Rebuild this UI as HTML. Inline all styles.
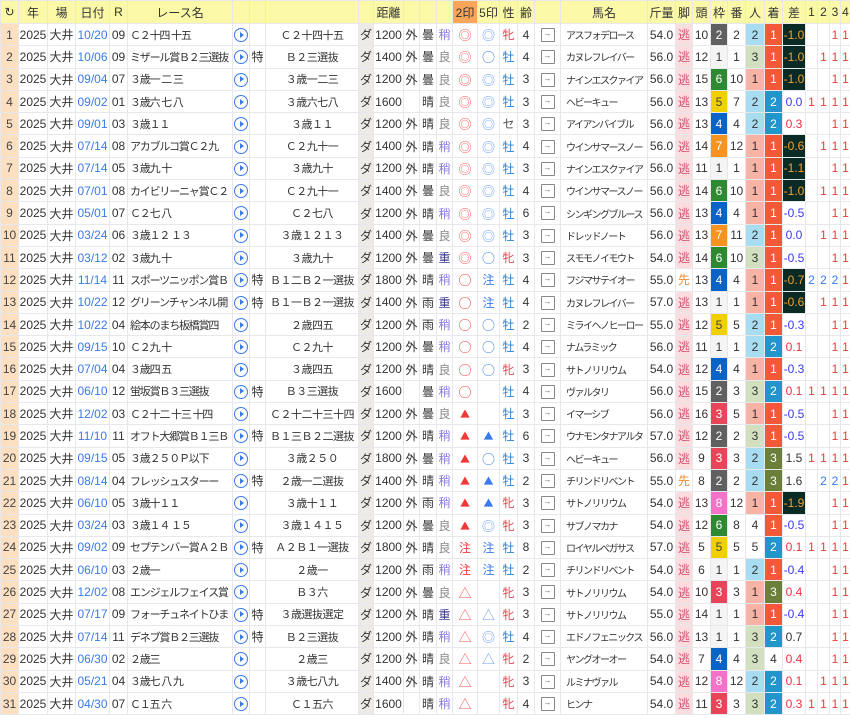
<!DOCTYPE html>
<html><head><meta charset="utf-8">
<style>
*{margin:0;padding:0;box-sizing:border-box}
body{width:850px;height:715px;overflow:hidden;background:#fff;font-family:"Liberation Sans","Noto Sans CJK JP",sans-serif;font-size:12px;color:#333}
table{border-collapse:collapse;table-layout:fixed;width:850px}
td,th{border:1px solid #e6e8ec;text-align:center;white-space:nowrap;overflow:hidden;height:22.3px;padding:0;font-weight:normal}
th{background:#fbf9a8;height:23px;color:#333}
th.o{background:#f9a55a}
td.i{background:#fde0c2;color:#444}
td.d{color:#3a7ae8}
td.n{text-align:left;padding-left:2px;font-size:11px;letter-spacing:-1.2px}
td.c{font-size:11px;letter-spacing:-0.5px}
td.h{text-align:left;padding-left:5px;font-size:10px;letter-spacing:-1.5px}
td.g{background:#eeeae5}
.p::after{content:"";display:inline-block;width:12px;height:12px;border:1.5px solid #3a7ae8;border-radius:50%;vertical-align:middle}
.p{position:relative}
.p::before{content:"";position:absolute;left:7px;top:50%;margin-top:-3px;border-left:4px solid #3a7ae8;border-top:3px solid transparent;border-bottom:3px solid transparent}
.a::after{content:"→";display:inline-block;width:12px;height:12px;border:1px solid #888;border-radius:1px;font-size:8px;line-height:10px;color:#666;vertical-align:middle}
.y{color:#8a7ae0}.l{color:#888}.z{color:#3a3a90}
.mk{font-family:"Noto Sans CJK JP",sans-serif;font-size:13px}
td.t{font-size:10px}
.r{color:#f03a3a}.b{color:#3a7af0}
.rt{color:#f55}.bt{color:#6a9af5}
.m{color:#2a80d0}.f{color:#e84050}.se{color:#555}
.k{background:#fbdde0;color:#d05070}
.kk{color:#f08a30}
.w1{background:#f4f4f4}.w2{background:#606060;color:#fff}.w3{background:#e8455a;color:#fff}.w4{background:#0a64c8;color:#fff}.w5{background:#f0d000;color:#444}.w6{background:#2e8a30;color:#fff}.w7{background:#f79420;color:#fff}.w8{background:#f672c8;color:#fff}
.n1{background:#f9b3a5}.n2{background:#a8dcf0}.n3{background:#d3e0c0}
.c1{background:#f5573a;color:#fff}.c2{background:#2296c9;color:#fff}.c3{background:#6b7f3a;color:#fff}
.sd{background:#0a2a25;color:#f0a030}
.sn{color:#3a3af0}.sp{color:#f03040}
</style></head><body>
<table>
<colgroup><col style="width:18px"><col style="width:29px"><col style="width:28px"><col style="width:34px"><col style="width:18px"><col style="width:105px"><col style="width:17px"><col style="width:16px"><col style="width:93px"><col style="width:15px"><col style="width:30px"><col style="width:16px"><col style="width:17px"><col style="width:16px"><col style="width:25px"><col style="width:22px"><col style="width:18px"><col style="width:17px"><col style="width:26px"><col style="width:87px"><col style="width:28px"><col style="width:17px"><col style="width:18px"><col style="width:17px"><col style="width:18px"><col style="width:19px"><col style="width:18px"><col style="width:23px"><col style="width:12px"><col style="width:12px"><col style="width:11px"><col style="width:10px"></colgroup>
<tr><th>↻</th><th>年</th><th>場</th><th>日付</th><th>R</th><th>レース名</th><th></th><th></th><th></th><th></th><th>距離</th><th></th><th></th><th></th><th class="o">2印</th><th>5印</th><th>性</th><th>齢</th><th></th><th>馬名</th><th>斤量</th><th>脚</th><th>頭</th><th>枠</th><th>番</th><th>人</th><th>着</th><th>差</th><th>1</th><th>2</th><th>3</th><th>4</th></tr>
<tr><td class="i">1</td><td>2025</td><td>大井</td><td class="d">10/20</td><td>09</td><td class="n">Ｃ２十四 十五</td><td class="p"></td><td></td><td class="c">Ｃ２十四十五</td><td class="g">ダ</td><td>1200</td><td>外</td><td>曇</td><td class="y">稍</td><td class="mk rt">◎</td><td class="mk bt">◎</td><td class="f">牝</td><td>4</td><td class="a"></td><td class="h">アスフォデロース</td><td>54.0</td><td class="k">逃</td><td>10</td><td class="w2">2</td><td>2</td><td class="n2">2</td><td class="c1">1</td><td class="sd">-1.0</td><td></td><td></td><td class="r">1</td><td class="r">1</td></tr>
<tr><td class="i">2</td><td>2025</td><td>大井</td><td class="d">10/06</td><td>09</td><td class="n">ミザール賞Ｂ２三選抜</td><td class="p"></td><td>特</td><td class="c">Ｂ２三選抜</td><td class="g">ダ</td><td>1400</td><td>外</td><td>曇</td><td class="l">良</td><td class="mk rt">◎</td><td class="mk b">○</td><td class="m">牡</td><td>4</td><td class="a"></td><td class="h">カヌレフレイバー</td><td>56.0</td><td class="k">逃</td><td>12</td><td class="w1">1</td><td>1</td><td class="n3">3</td><td class="c1">1</td><td class="sd">-1.0</td><td></td><td class="r">1</td><td class="r">1</td><td class="r">1</td></tr>
<tr><td class="i">3</td><td>2025</td><td>大井</td><td class="d">09/04</td><td>07</td><td class="n">３歳一 二 三</td><td class="p"></td><td></td><td class="c">３歳一二三</td><td class="g">ダ</td><td>1200</td><td>外</td><td>曇</td><td class="l">良</td><td class="mk rt">◎</td><td class="mk bt">◎</td><td class="m">牡</td><td>3</td><td class="a"></td><td class="h">ナインエスクァイア</td><td>56.0</td><td class="k">逃</td><td>15</td><td class="w6">6</td><td>10</td><td class="n1">1</td><td class="c1">1</td><td class="sd">-1.0</td><td></td><td></td><td class="r">1</td><td class="r">1</td></tr>
<tr><td class="i">4</td><td>2025</td><td>大井</td><td class="d">09/02</td><td>01</td><td class="n">３歳六 七 八</td><td class="p"></td><td></td><td class="c">３歳六七八</td><td class="g">ダ</td><td>1600</td><td></td><td>晴</td><td class="l">良</td><td class="mk rt">◎</td><td class="mk bt">◎</td><td class="m">牡</td><td>3</td><td class="a"></td><td class="h">ヘビーキュー</td><td>56.0</td><td class="k">逃</td><td>13</td><td class="w5">5</td><td>7</td><td class="n2">2</td><td class="c2">2</td><td class="sn">0.0</td><td class="r">1</td><td class="r">1</td><td class="r">1</td><td class="r">1</td></tr>
<tr><td class="i">5</td><td>2025</td><td>大井</td><td class="d">09/01</td><td>03</td><td class="n">３歳１１</td><td class="p"></td><td></td><td class="c">３歳１１</td><td class="g">ダ</td><td>1200</td><td>外</td><td>晴</td><td class="l">良</td><td class="mk rt">◎</td><td class="mk bt">◎</td><td class="se">セ</td><td>3</td><td class="a"></td><td class="h">アイアンバイブル</td><td>56.0</td><td class="k">逃</td><td>13</td><td class="w4">4</td><td>4</td><td class="n2">2</td><td class="c2">2</td><td class="sp">0.3</td><td></td><td></td><td class="r">1</td><td class="r">1</td></tr>
<tr><td class="i">6</td><td>2025</td><td>大井</td><td class="d">07/14</td><td>08</td><td class="n">アカブルコ賞Ｃ２九</td><td class="p"></td><td></td><td class="c">Ｃ２九十一</td><td class="g">ダ</td><td>1400</td><td>外</td><td>晴</td><td class="y">稍</td><td class="mk rt">◎</td><td class="mk bt">◎</td><td class="m">牡</td><td>4</td><td class="a"></td><td class="h">ウインサマースノー</td><td>56.0</td><td class="k">逃</td><td>14</td><td class="w7">7</td><td>12</td><td class="n1">1</td><td class="c1">1</td><td class="sd">-0.6</td><td></td><td class="r">1</td><td class="r">1</td><td class="r">1</td></tr>
<tr><td class="i">7</td><td>2025</td><td>大井</td><td class="d">07/14</td><td>05</td><td class="n">３歳九 十</td><td class="p"></td><td></td><td class="c">３歳九十</td><td class="g">ダ</td><td>1200</td><td>外</td><td>晴</td><td class="y">稍</td><td class="mk rt">◎</td><td class="mk bt">◎</td><td class="m">牡</td><td>3</td><td class="a"></td><td class="h">ナインエスクァイア</td><td>56.0</td><td class="k">逃</td><td>11</td><td class="w1">1</td><td>1</td><td class="n1">1</td><td class="c1">1</td><td class="sd">-1.1</td><td></td><td></td><td class="r">1</td><td class="r">1</td></tr>
<tr><td class="i">8</td><td>2025</td><td>大井</td><td class="d">07/01</td><td>08</td><td class="n">カイビリーニャ賞Ｃ２</td><td class="p"></td><td></td><td class="c">Ｃ２九十一</td><td class="g">ダ</td><td>1400</td><td>外</td><td>曇</td><td class="l">良</td><td class="mk rt">◎</td><td class="mk bt">◎</td><td class="m">牡</td><td>4</td><td class="a"></td><td class="h">ウインサマースノー</td><td>56.0</td><td class="k">逃</td><td>14</td><td class="w6">6</td><td>10</td><td class="n1">1</td><td class="c1">1</td><td class="sd">-1.0</td><td></td><td class="r">1</td><td class="r">1</td><td class="r">1</td></tr>
<tr><td class="i">9</td><td>2025</td><td>大井</td><td class="d">05/01</td><td>07</td><td class="n">Ｃ２七 八</td><td class="p"></td><td></td><td class="c">Ｃ２七八</td><td class="g">ダ</td><td>1200</td><td>外</td><td>晴</td><td class="y">稍</td><td class="mk rt">◎</td><td class="mk bt">◎</td><td class="m">牡</td><td>6</td><td class="a"></td><td class="h">シンギングブルース</td><td>56.0</td><td class="k">逃</td><td>13</td><td class="w4">4</td><td>4</td><td class="n1">1</td><td class="c1">1</td><td class="sn">-0.5</td><td></td><td></td><td class="r">1</td><td class="r">1</td></tr>
<tr><td class="i">10</td><td>2025</td><td>大井</td><td class="d">03/24</td><td>06</td><td class="n">３歳１２ １３</td><td class="p"></td><td></td><td class="c">３歳１２１３</td><td class="g">ダ</td><td>1400</td><td>外</td><td>曇</td><td class="l">良</td><td class="mk rt">◎</td><td class="mk bt">◎</td><td class="m">牡</td><td>3</td><td class="a"></td><td class="h">ドレッドノート</td><td>56.0</td><td class="k">逃</td><td>13</td><td class="w7">7</td><td>11</td><td class="n2">2</td><td class="c1">1</td><td class="sn">0.0</td><td></td><td class="r">1</td><td class="r">1</td><td class="r">1</td></tr>
<tr><td class="i">11</td><td>2025</td><td>大井</td><td class="d">03/12</td><td>02</td><td class="n">３歳九 十</td><td class="p"></td><td></td><td class="c">３歳九十</td><td class="g">ダ</td><td>1200</td><td>外</td><td>曇</td><td class="z">重</td><td class="mk rt">◎</td><td class="mk b">○</td><td class="f">牝</td><td>3</td><td class="a"></td><td class="h">スモモノイモウト</td><td>54.0</td><td class="k">逃</td><td>14</td><td class="w6">6</td><td>10</td><td class="n3">3</td><td class="c1">1</td><td class="sn">-0.5</td><td></td><td></td><td class="r">1</td><td class="r">1</td></tr>
<tr><td class="i">12</td><td>2025</td><td>大井</td><td class="d">11/14</td><td>11</td><td class="n">スポーツニッポン賞Ｂ</td><td class="p"></td><td>特</td><td class="c">Ｂ１二Ｂ２一選抜</td><td class="g">ダ</td><td>1800</td><td>外</td><td>晴</td><td class="y">稍</td><td class="mk r">○</td><td class="b">注</td><td class="m">牡</td><td>4</td><td class="a"></td><td class="h">フジマサテイオー</td><td>55.0</td><td class="kk">先</td><td>13</td><td class="w4">4</td><td>4</td><td class="n1">1</td><td class="c1">1</td><td class="sd">-0.7</td><td class="b">2</td><td class="b">2</td><td class="b">2</td><td class="r">1</td></tr>
<tr><td class="i">13</td><td>2025</td><td>大井</td><td class="d">10/22</td><td>12</td><td class="n">グリーンチャンネル開</td><td class="p"></td><td>特</td><td class="c">Ｂ１一Ｂ２一選抜</td><td class="g">ダ</td><td>1400</td><td>外</td><td>雨</td><td class="z">重</td><td class="mk r">○</td><td class="b">注</td><td class="m">牡</td><td>4</td><td class="a"></td><td class="h">カヌレフレイバー</td><td>57.0</td><td class="k">逃</td><td>13</td><td class="w1">1</td><td>1</td><td class="n1">1</td><td class="c1">1</td><td class="sd">-0.6</td><td></td><td class="r">1</td><td class="r">1</td><td class="r">1</td></tr>
<tr><td class="i">14</td><td>2025</td><td>大井</td><td class="d">10/22</td><td>04</td><td class="n">絵本のまち板橋賞四</td><td class="p"></td><td></td><td class="c">２歳四五</td><td class="g">ダ</td><td>1200</td><td>外</td><td>雨</td><td class="y">稍</td><td class="mk r">○</td><td class="mk b">○</td><td class="m">牡</td><td>2</td><td class="a"></td><td class="h">ミライヘノヒーロー</td><td>55.0</td><td class="k">逃</td><td>12</td><td class="w5">5</td><td>5</td><td class="n2">2</td><td class="c1">1</td><td class="sn">-0.3</td><td></td><td></td><td class="r">1</td><td class="r">1</td></tr>
<tr><td class="i">15</td><td>2025</td><td>大井</td><td class="d">09/15</td><td>10</td><td class="n">Ｃ２九 十</td><td class="p"></td><td></td><td class="c">Ｃ２九十</td><td class="g">ダ</td><td>1200</td><td>外</td><td>曇</td><td class="y">稍</td><td class="mk r">○</td><td class="mk b">○</td><td class="m">牡</td><td>4</td><td class="a"></td><td class="h">ナムラミック</td><td>56.0</td><td class="k">逃</td><td>11</td><td class="w1">1</td><td>1</td><td class="n2">2</td><td class="c2">2</td><td class="sp">0.1</td><td></td><td></td><td class="r">1</td><td class="r">1</td></tr>
<tr><td class="i">16</td><td>2025</td><td>大井</td><td class="d">07/04</td><td>04</td><td class="n">３歳四 五</td><td class="p"></td><td></td><td class="c">３歳四五</td><td class="g">ダ</td><td>1200</td><td>外</td><td>晴</td><td class="l">良</td><td class="mk r">○</td><td class="mk b">○</td><td class="f">牝</td><td>3</td><td class="a"></td><td class="h">サトノリリウム</td><td>54.0</td><td class="k">逃</td><td>12</td><td class="w4">4</td><td>4</td><td class="n1">1</td><td class="c1">1</td><td class="sn">-0.3</td><td></td><td></td><td class="r">1</td><td class="r">1</td></tr>
<tr><td class="i">17</td><td>2025</td><td>大井</td><td class="d">06/10</td><td>12</td><td class="n">蛍坂賞Ｂ３三選抜</td><td class="p"></td><td>特</td><td class="c">Ｂ３三選抜</td><td class="g">ダ</td><td>1600</td><td></td><td>曇</td><td class="y">稍</td><td class="mk r">○</td><td></td><td class="m">牡</td><td>4</td><td class="a"></td><td class="h">ヴァルタリ</td><td>56.0</td><td class="k">逃</td><td>15</td><td class="w2">2</td><td>3</td><td class="n3">3</td><td class="c2">2</td><td class="sp">0.1</td><td class="r">1</td><td class="r">1</td><td class="r">1</td><td class="r">1</td></tr>
<tr><td class="i">18</td><td>2025</td><td>大井</td><td class="d">12/02</td><td>03</td><td class="n">Ｃ２十二 十三 十四</td><td class="p"></td><td></td><td class="c">Ｃ２十二十三十四</td><td class="g">ダ</td><td>1200</td><td>外</td><td>曇</td><td class="l">良</td><td class="mk t r">▲</td><td></td><td class="m">牡</td><td>3</td><td class="a"></td><td class="h">イマーシブ</td><td>56.0</td><td class="k">逃</td><td>16</td><td class="w3">3</td><td>5</td><td class="n1">1</td><td class="c1">1</td><td class="sn">-0.5</td><td></td><td></td><td class="r">1</td><td class="r">1</td></tr>
<tr><td class="i">19</td><td>2025</td><td>大井</td><td class="d">11/10</td><td>11</td><td class="n">オフト大郷賞Ｂ１三Ｂ</td><td class="p"></td><td>特</td><td class="c">Ｂ１三Ｂ２二選抜</td><td class="g">ダ</td><td>1200</td><td>外</td><td>晴</td><td class="y">稍</td><td class="mk t r">▲</td><td class="mk t b">▲</td><td class="m">牡</td><td>6</td><td class="a"></td><td class="h">ウナモンタナアルタ</td><td>57.0</td><td class="k">逃</td><td>12</td><td class="w2">2</td><td>2</td><td class="n3">3</td><td class="c1">1</td><td class="sn">-0.5</td><td></td><td></td><td class="r">1</td><td class="r">1</td></tr>
<tr><td class="i">20</td><td>2025</td><td>大井</td><td class="d">09/15</td><td>05</td><td class="n">３歳２５０Ｐ以下</td><td class="p"></td><td></td><td class="c">３歳２５０</td><td class="g">ダ</td><td>1800</td><td>外</td><td>曇</td><td class="y">稍</td><td class="mk t r">▲</td><td class="mk b">○</td><td class="m">牡</td><td>3</td><td class="a"></td><td class="h">ヘビーキュー</td><td>56.0</td><td class="k">逃</td><td>9</td><td class="w3">3</td><td>3</td><td class="n2">2</td><td class="c3">3</td><td>1.5</td><td class="r">1</td><td class="r">1</td><td class="r">1</td><td class="r">1</td></tr>
<tr><td class="i">21</td><td>2025</td><td>大井</td><td class="d">08/14</td><td>04</td><td class="n">フレッシュスターー</td><td class="p"></td><td>特</td><td class="c">２歳一二選抜</td><td class="g">ダ</td><td>1400</td><td>外</td><td>晴</td><td class="y">稍</td><td class="mk t r">▲</td><td class="mk t b">▲</td><td class="m">牡</td><td>2</td><td class="a"></td><td class="h">チリンドリベント</td><td>55.0</td><td class="kk">先</td><td>8</td><td class="w2">2</td><td>2</td><td class="n2">2</td><td class="c3">3</td><td>1.6</td><td></td><td class="b">2</td><td class="b">2</td><td class="r">1</td></tr>
<tr><td class="i">22</td><td>2025</td><td>大井</td><td class="d">06/10</td><td>05</td><td class="n">３歳十１１</td><td class="p"></td><td></td><td class="c">３歳十１１</td><td class="g">ダ</td><td>1200</td><td>外</td><td>雨</td><td class="y">稍</td><td class="mk t r">▲</td><td class="mk t b">▲</td><td class="f">牝</td><td>3</td><td class="a"></td><td class="h">サトノリリウム</td><td>54.0</td><td class="k">逃</td><td>13</td><td class="w8">8</td><td>12</td><td class="n1">1</td><td class="c1">1</td><td class="sd">-1.9</td><td></td><td></td><td class="r">1</td><td class="r">1</td></tr>
<tr><td class="i">23</td><td>2025</td><td>大井</td><td class="d">03/24</td><td>03</td><td class="n">３歳１４ １５</td><td class="p"></td><td></td><td class="c">３歳１４１５</td><td class="g">ダ</td><td>1200</td><td>外</td><td>曇</td><td class="l">良</td><td class="mk t r">▲</td><td class="mk bt">◎</td><td class="f">牝</td><td>3</td><td class="a"></td><td class="h">サブノマカナ</td><td>54.0</td><td class="k">逃</td><td>12</td><td class="w6">6</td><td>8</td><td>4</td><td class="c1">1</td><td class="sn">-0.5</td><td></td><td></td><td class="r">1</td><td class="r">1</td></tr>
<tr><td class="i">24</td><td>2025</td><td>大井</td><td class="d">09/02</td><td>09</td><td class="n">セプテンバー賞Ａ２Ｂ</td><td class="p"></td><td>特</td><td class="c">Ａ２Ｂ１一選抜</td><td class="g">ダ</td><td>1800</td><td>外</td><td>晴</td><td class="l">良</td><td class="r">注</td><td class="b">注</td><td class="m">牡</td><td>8</td><td class="a"></td><td class="h">ロイヤルペガサス</td><td>57.0</td><td class="k">逃</td><td>5</td><td class="w5">5</td><td>5</td><td>5</td><td class="c2">2</td><td class="sp">0.1</td><td class="r">1</td><td class="r">1</td><td class="r">1</td><td class="r">1</td></tr>
<tr><td class="i">25</td><td>2025</td><td>大井</td><td class="d">06/10</td><td>03</td><td class="n">２歳一</td><td class="p"></td><td></td><td class="c">２歳一</td><td class="g">ダ</td><td>1200</td><td>外</td><td>雨</td><td class="y">稍</td><td class="r">注</td><td class="b">注</td><td class="m">牡</td><td>2</td><td class="a"></td><td class="h">チリンドリベント</td><td>54.0</td><td class="k">逃</td><td>6</td><td class="w1">1</td><td>1</td><td class="n2">2</td><td class="c1">1</td><td class="sn">-0.4</td><td></td><td></td><td class="r">1</td><td class="r">1</td></tr>
<tr><td class="i">26</td><td>2025</td><td>大井</td><td class="d">12/02</td><td>08</td><td class="n">エンジェルフェイス賞</td><td class="p"></td><td></td><td class="c">Ｂ３六</td><td class="g">ダ</td><td>1200</td><td>外</td><td>曇</td><td class="l">良</td><td class="mk rt">△</td><td></td><td class="f">牝</td><td>3</td><td class="a"></td><td class="h">サトノリリウム</td><td>54.0</td><td class="k">逃</td><td>10</td><td class="w3">3</td><td>3</td><td class="n1">1</td><td class="c3">3</td><td class="sp">0.4</td><td></td><td></td><td class="r">1</td><td class="r">1</td></tr>
<tr><td class="i">27</td><td>2025</td><td>大井</td><td class="d">07/17</td><td>09</td><td class="n">フォーチュネイトひま</td><td class="p"></td><td>特</td><td class="c">３歳選抜選定</td><td class="g">ダ</td><td>1200</td><td>外</td><td>晴</td><td class="z">重</td><td class="mk rt">△</td><td class="mk bt">△</td><td class="f">牝</td><td>3</td><td class="a"></td><td class="h">サトノリリウム</td><td>55.0</td><td class="k">逃</td><td>14</td><td class="w1">1</td><td>1</td><td class="n1">1</td><td class="c1">1</td><td class="sn">-0.4</td><td></td><td></td><td class="r">1</td><td class="r">1</td></tr>
<tr><td class="i">28</td><td>2025</td><td>大井</td><td class="d">07/14</td><td>11</td><td class="n">デネブ賞Ｂ２三選抜</td><td class="p"></td><td>特</td><td class="c">Ｂ２三選抜</td><td class="g">ダ</td><td>1200</td><td>外</td><td>晴</td><td class="y">稍</td><td class="mk rt">△</td><td class="mk bt">◎</td><td class="m">牡</td><td>4</td><td class="a"></td><td class="h">エドノフェニックス</td><td>56.0</td><td class="k">逃</td><td>13</td><td class="w1">1</td><td>1</td><td class="n3">3</td><td class="c2">2</td><td>0.7</td><td></td><td></td><td class="r">1</td><td class="r">1</td></tr>
<tr><td class="i">29</td><td>2025</td><td>大井</td><td class="d">06/30</td><td>02</td><td class="n">２歳三</td><td class="p"></td><td></td><td class="c">２歳三</td><td class="g">ダ</td><td>1200</td><td>外</td><td>晴</td><td class="l">良</td><td class="mk rt">△</td><td class="mk bt">△</td><td class="f">牝</td><td>2</td><td class="a"></td><td class="h">ヤングオーオー</td><td>54.0</td><td class="k">逃</td><td>7</td><td class="w4">4</td><td>4</td><td class="n3">3</td><td>4</td><td class="sp">0.4</td><td></td><td></td><td class="r">1</td><td class="r">1</td></tr>
<tr><td class="i">30</td><td>2025</td><td>大井</td><td class="d">05/21</td><td>04</td><td class="n">３歳七 八 九</td><td class="p"></td><td></td><td class="c">３歳七八九</td><td class="g">ダ</td><td>1400</td><td>外</td><td>晴</td><td class="y">稍</td><td class="mk rt">△</td><td></td><td class="f">牝</td><td>3</td><td class="a"></td><td class="h">ルミナヴァル</td><td>54.0</td><td class="k">逃</td><td>12</td><td class="w8">8</td><td>12</td><td class="n2">2</td><td class="c2">2</td><td class="sp">0.1</td><td></td><td class="r">1</td><td class="r">1</td><td class="r">1</td></tr>
<tr><td class="i">31</td><td>2025</td><td>大井</td><td class="d">04/30</td><td>07</td><td class="n">Ｃ１五 六</td><td class="p"></td><td></td><td class="c">Ｃ１五六</td><td class="g">ダ</td><td>1600</td><td></td><td>晴</td><td class="y">稍</td><td class="mk rt">△</td><td></td><td class="f">牝</td><td>4</td><td class="a"></td><td class="h">ヒンナ</td><td>54.0</td><td class="k">逃</td><td>11</td><td class="w3">3</td><td>3</td><td class="n3">3</td><td class="c2">2</td><td class="sp">0.3</td><td class="r">1</td><td class="r">1</td><td class="r">1</td><td class="r">1</td></tr>
</table>
</body></html>
